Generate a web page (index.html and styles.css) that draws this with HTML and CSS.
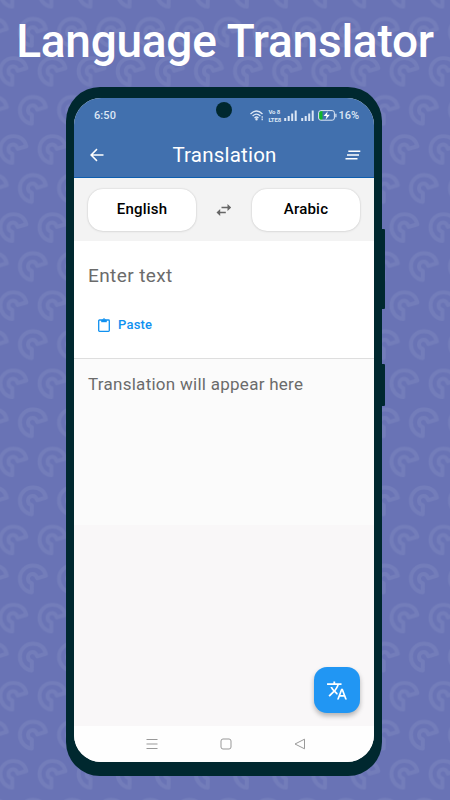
FILE: index.html
```
<!DOCTYPE html>
<html lang="en">
<head>
    <meta charset="UTF-8">
    <meta name="viewport" content="width=device-width, initial-scale=1.0">
    <title>Language Translator</title>
    <link rel="stylesheet" href="styles.css">
</head>
<body>
    <svg class="backdrop" width="450" height="800" aria-hidden="true">
        <defs>
            <g id="swirl" fill="none" stroke="#737dba" stroke-width="3.9" stroke-linejoin="round">
                <path d="M-1.2 13.7 C-8.5 12.7 -13 6.5 -13 0 C-13 -7.5 -7.3 -13 0 -13 C6.5 -13 11.3 -9.5 13 -3 L4.3 -.4 C3.2 -3.6 1.6 -4.7 -.3 -4.7 C-3 -4.7 -4.9 -2.6 -4.9 0 C-4.9 2.4 -3.5 3.9 -1.1 4.6 Z"/>
            </g>
            <pattern id="swirls" width="39.1" height="78.1" patternUnits="userSpaceOnUse" x="13.4" y="12.5">
                <use href="#swirl" x="19.55" y="19.5"/>
                <use href="#swirl" x="0" y="58.6"/>
                <use href="#swirl" x="39.1" y="58.6"/>
            </pattern>
        </defs>
        <rect width="450" height="800" fill="url(#swirls)"/>
    </svg>

    <h1>Language Translator</h1>

    <div class="phone">
        <div class="side-button volume"></div>
        <div class="side-button power"></div>
        <div class="camera"></div>

        <div class="screen">
            <header>
                <div class="status-bar">
                    <span>6:50</span>
                    <div class="status-icons">
                        <svg width="14" height="11" viewBox="0 0 14 11" fill="none" stroke="#dce7f5" stroke-width="1.3">
                            <path d="M.5 4 Q6.5 -2 12.5 4M2.6 6 Q6.5 2.2 10.4 6M4.5 8 Q6.5 6 8.5 8"/>
                            <circle cx="6.5" cy="9.3" r=".6"/>
                            <path d="M12.2 6.2v1.6M12.2 8.6v1.6"/>
                        </svg>
                        <div class="volte"><span>Vo 8</span><span>LTE8</span></div>
                        <svg width="13" height="11" viewBox="0 0 13 11" stroke="#dce7f5" stroke-width="2">
                            <path d="M1.2 8v3M4.7 6v5M8.2 3.5v7.5M11.7 .5v10.5"/>
                        </svg>
                        <svg class="signal" width="13" height="11" viewBox="0 0 13 11" stroke="#dce7f5" stroke-width="2">
                            <path d="M1.2 8v3M4.7 6v5M8.2 3.5v7.5M11.7 .5v10.5"/>
                        </svg>
                        <svg class="battery" width="19" height="11" viewBox="0 0 19 11">
                            <path d="M1 3q0-2 2-2h1.5v9H3q-2 0-2-2z" fill="#12b52b"/>
                            <rect x=".6" y=".6" width="15.8" height="9.6" rx="2.2" fill="none" stroke="#dce7f5"/>
                            <path d="M17.9 3.7v3.5" stroke="#dce7f5" stroke-width="1.2"/>
                            <path d="M9.8 1.2 5.6 6h3L7.5 9.7l4.4-5h-3z" fill="#fff"/>
                        </svg>
                        <span class="percent">16%</span>
                    </div>
                </div>
                <div class="app-bar">
                    <svg width="14" height="14" viewBox="0 0 14 14" fill="none" stroke="#fff" stroke-width="1.5">
                        <path d="M13.5 7H1.3M7 1.1 1.1 7 7 12.9"/>
                    </svg>
                    <h2>Translation</h2>
                    <svg width="16" height="10" viewBox="0 0 16 10" stroke="#fff" stroke-width="1.6">
                        <path d="M3.3 1.2h12M2 5h12M.5 8.8h12"/>
                    </svg>
                </div>
            </header>

            <div class="languages">
                <button type="button">English</button>
                <svg width="16" height="12" viewBox="0 0 16 12" fill="#666">
                    <path d="M11.5 0v2.8H5.5v1.4h6V7L15.2 3.5zM4.2 5v2.8h5.6v1.4H4.2V12L.5 8.5z"/>
                </svg>
                <button type="button">Arabic</button>
            </div>

            <div class="source">
                <p>Enter text</p>
                <button class="paste" type="button">
                    <svg width="12" height="14" viewBox="0 0 12 14" fill="none" stroke="#1091f0" stroke-width="1.3">
                        <rect x=".7" y="2" width="10.6" height="11.3" rx=".8"/>
                        <path d="M3.2 2h5.6v2.2H3.2z" fill="#1091f0" stroke="none"/>
                        <circle cx="6" cy="1.7" r="1" stroke-width="1"/>
                    </svg>
                    Paste
                </button>
            </div>

            <div class="result">Translation will appear here</div>

            <div class="empty">
                <button class="translate" type="button" aria-label="Translate">
                    <svg width="20" height="19" viewBox="1 1.5 22 21" fill="#fff">
                        <path d="M12.87 15.07l-2.54-2.51.03-.03c1.74-1.94 2.98-4.17 3.71-6.53H17V4h-7V2H8v2H1v1.99h11.17C11.5 7.92 10.44 9.75 9 11.35 8.07 10.32 7.3 9.19 6.69 8h-2c.73 1.63 1.73 3.17 2.98 4.56l-5.09 5.02L4 19l5-5 3.11 3.11.76-2.04zM18.5 10h-2L12 22h2l1.12-3h4.75L21 22h2l-4.5-12zm-2.62 7l1.62-4.33L19.12 17h-3.24z"/>
                    </svg>
                </button>
            </div>

            <nav>
                <svg width="12" height="12" viewBox="0 0 12 12" stroke="#999">
                    <path d="M.5 1.5h11M.5 6h11M.5 10.5h11"/>
                </svg>
                <svg width="12" height="12" viewBox="0 0 12 12" fill="none" stroke="#999">
                    <rect x="1" y="1" width="10" height="10" rx="2"/>
                </svg>
                <svg width="12" height="12" viewBox="0 0 12 12" fill="none" stroke="#999" stroke-linejoin="round">
                    <path d="M10.5 1.2v9.6L1 6z"/>
                </svg>
            </nav>
        </div>
    </div>
</body>
</html>
```
FILE: styles.css
```
* {
    box-sizing: border-box;
}

body {
    position: relative;
    width: 450px;
    height: 800px;
    margin: 0;
    overflow: hidden;
    background: #6973b5;
    font-family: Roboto, "Liberation Sans", sans-serif;
}

svg {
    display: block;
    flex-shrink: 0;
}

.backdrop {
    position: absolute;
    top: 0;
    left: 0;
    z-index: -1;
}

h1, h2, p {
    margin: 0;
}

h1 {
    height: 87px;
    padding-top: 13px;
    color: #fff;
    font-size: 46px;
    font-weight: 500;
    line-height: 56px;
    letter-spacing: -.25px;
    text-align: center;
    white-space: nowrap;
}

button {
    padding: 0;
    border: 0;
    font-family: inherit;
}

.phone {
    position: relative;
    width: 316px;
    height: 689px;
    margin-left: 66px;
    padding: 11px 8px 14px;
    background: #00282f;
    border-radius: 34px;
}

.side-button {
    position: absolute;
    right: -3px;
    width: 5px;
    background: #00282f;
    border-radius: 0 1px 1px 0;
}

.volume {
    top: 142px;
    height: 80px;
}

.power {
    top: 277px;
    height: 42px;
}

.camera {
    position: absolute;
    top: 15px;
    left: 150px;
    width: 16px;
    height: 16px;
    background: #00282f;
    border-radius: 50%;
}

.screen {
    display: flex;
    flex-direction: column;
    height: 100%;
    overflow: hidden;
    background: #f9f7f8;
    border-radius: 27px;
}

header {
    height: 80px;
    background: #4170ae;
    border-bottom: 1px solid #0e5eae;
    color: #fff;
}

.status-bar {
    display: flex;
    align-items: center;
    justify-content: space-between;
    height: 35px;
    padding: 0 15px 0 20px;
    color: #dce7f5;
    font-size: 11px;
    font-weight: 500;
    letter-spacing: .1px;
}

.status-icons {
    display: flex;
    align-items: center;
}

.volte {
    display: flex;
    flex-direction: column;
    gap: 1px;
    width: 14px;
    margin: 0 2px 0 4px;
    font-size: 6px;
    font-weight: 700;
    line-height: 7px;
    letter-spacing: -.1px;
    white-space: nowrap;
}

.signal {
    margin-left: 4px;
}

.battery {
    margin: 0 1px 0 4px;
}

.percent {
    letter-spacing: 0;
}

.app-bar {
    display: flex;
    align-items: center;
    justify-content: space-between;
    height: 44px;
    padding: 0 13px 0 16px;
}

h2 {
    font-size: 20.5px;
    font-weight: 400;
    letter-spacing: .2px;
}

.languages {
    display: flex;
    align-items: center;
    justify-content: space-between;
    height: 63px;
    padding: 0 14px;
    background: #f3f3f3;
}

.languages button {
    width: 108px;
    height: 42px;
    padding-bottom: 1px;
    background: #fff;
    border-radius: 15px;
    box-shadow: 0 0 2px rgba(0, 0, 0, .18), 0 1px 3px rgba(0, 0, 0, .05);
    color: #000;
    font-size: 15px;
    font-weight: 500;
    letter-spacing: .2px;
}

.source {
    height: 118px;
    padding: 23px 14px 0;
    background: #fff;
    border-bottom: 1px solid #dedede;
}

.source p {
    color: #6b6b6b;
    font-size: 19px;
    line-height: 24px;
    letter-spacing: .4px;
}

.paste {
    display: flex;
    align-items: center;
    gap: 8px;
    margin: 29px 0 0 10px;
    background: none;
    color: #1091f0;
    font-size: 13px;
    font-weight: 500;
    line-height: 16px;
    letter-spacing: .2px;
}

.result {
    height: 166px;
    padding: 15px 14px;
    background: #fbfbfb;
    color: #6b6b6b;
    font-size: 17px;
    line-height: 21px;
    letter-spacing: .27px;
}

.empty {
    display: flex;
    flex: 1;
    align-items: flex-end;
    justify-content: flex-end;
    padding: 0 14px 13px 0;
}

.translate {
    display: flex;
    align-items: center;
    justify-content: center;
    width: 46px;
    height: 46px;
    background: #2196f3;
    border-radius: 13px;
    box-shadow: 0 3px 5px rgba(0, 0, 0, .28);
}

nav {
    display: flex;
    justify-content: space-between;
    height: 36px;
    padding: 12px 68px 0 72px;
    background: #fefefe;
}
```
